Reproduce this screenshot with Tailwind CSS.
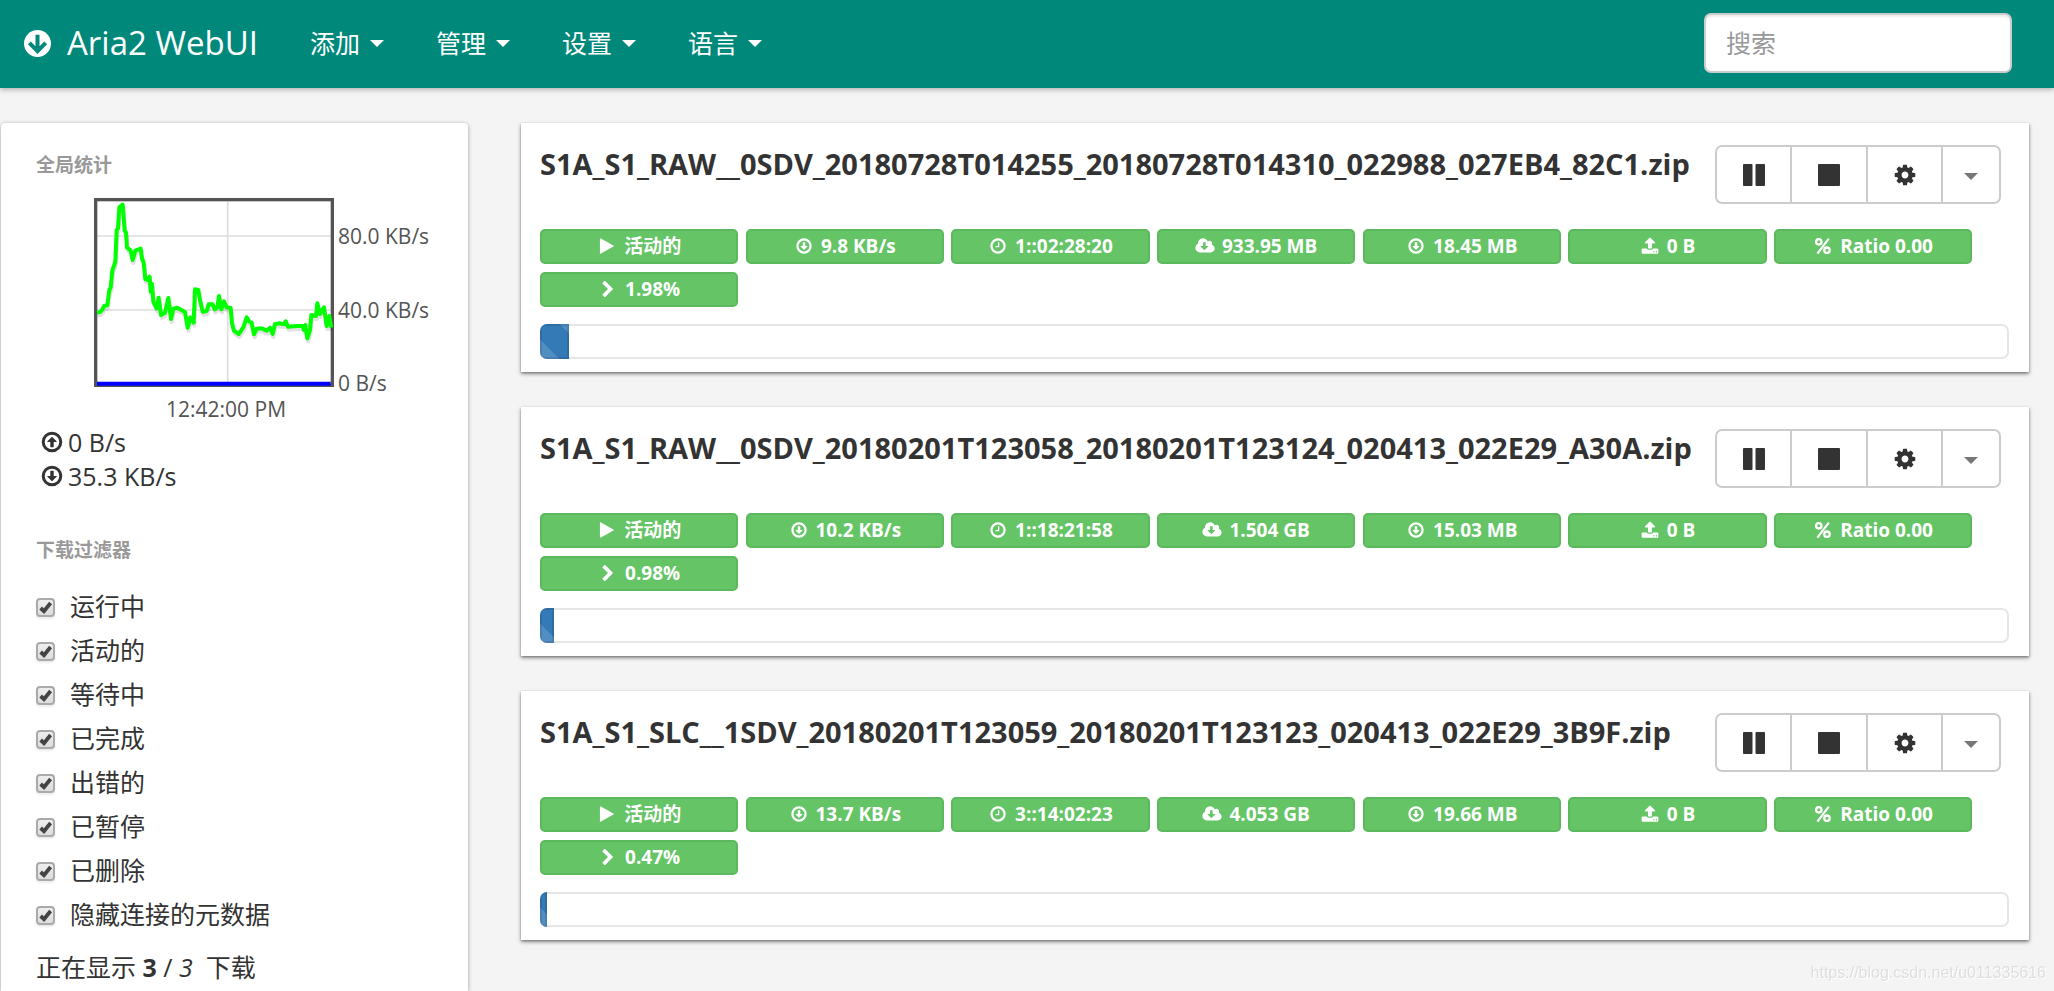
<!DOCTYPE html>
<html lang="zh-CN">
<head>
<meta charset="utf-8">
<meta name="viewport" content="width=device-width, initial-scale=1">
<title>Aria2 WebUI</title>
<script src="https://cdn.jsdelivr.net/npm/@tailwindcss/browser@4"></script>
</head>
<body class="min-h-screen overflow-x-hidden bg-[#f4f4f4] font-['Open_Sans','Noto_Sans_CJK_SC',sans-serif] text-[25px] text-[#333]">

<svg class="hidden" aria-hidden="true">
  <symbol id="play" viewBox="0 0 1792 1792"><path d="M1576 927l-1328 738q-23 13-39.5 3t-16.5-36v-1472q0-26 16.5-36t39.5 3l1328 738q23 13 23 31t-23 31z"/></symbol>
  <symbol id="down" viewBox="0 0 1792 1792"><path d="M1248 928q0 12-10 24l-319 319q-10 9-23 9t-23-9l-320-320q-15-16-7-35 8-20 30-20h192v-352q0-14 9-23t23-9h192q14 0 23 9t9 23v352h192q14 0 23 9t9 23z"/><circle cx="896" cy="896" r="656" fill="none" stroke="currentColor" stroke-width="224"/></symbol>
  <symbol id="up" viewBox="0 0 1792 1792"><g transform="rotate(180 896 896)"><path d="M1248 928q0 12-10 24l-319 319q-10 9-23 9t-23-9l-320-320q-15-16-7-35 8-20 30-20h192v-352q0-14 9-23t23-9h192q14 0 23 9t9 23v352h192q14 0 23 9t9 23z"/><circle cx="896" cy="896" r="656" fill="none" stroke="currentColor" stroke-width="224"/></g></symbol>
  <symbol id="clock" viewBox="0 0 1792 1792"><path d="M1024 544v448q0 14-9 23t-23 9h-320q-14 0-23-9t-9-23v-64q0-14 9-23t23-9h224v-352q0-14 9-23t23-9h64q14 0 23 9t9 23z"/><circle cx="896" cy="896" r="656" fill="none" stroke="currentColor" stroke-width="224"/></symbol>
  <symbol id="cloud" viewBox="-64 0 1920 1792"><path d="M1216 928q0-14-9-23t-23-9h-224v-352q0-13-9.5-22.5t-22.5-9.5h-192q-13 0-22.5 9.5t-9.5 22.5v352h-224q-13 0-22.5 9.5t-9.5 22.5q0 14 9 23l352 352q9 9 23 9t23-9l351-351q10-12 10-24zm640 224q0 159-112.5 271.5t-271.5 112.5h-1088q-185 0-316.5-131.5t-131.5-316.5q0-130 70-240t188-165q-2-30-2-43 0-212 150-362t362-150q156 0 285.5 87t188.5 231q71-62 166-62 106 0 181 75t75 181q0 76-41 138 130 31 213.5 135.5t83.5 238.5z"/></symbol>
  <symbol id="upload" viewBox="0 0 1792 1792"><path d="M1344 1472q0-26-19-45t-45-19-45 19-19 45 19 45 45 19 45-19 19-45zm256 0q0-26-19-45t-45-19-45 19-19 45 19 45 45 19 45-19 19-45zm128-224v320q0 40-28 68t-68 28h-1472q-40 0-68-28t-28-68v-320q0-40 28-68t68-28h427q21 56 70.5 92t110.5 36h256q61 0 110.5-36t70.5-92h427q40 0 68 28t28 68zm-325-648q-17 40-59 40h-256v448q0 26-19 45t-45 19h-256q-26 0-45-19t-19-45v-448h-256q-42 0-59-40-17-39 14-69l448-448q18-19 45-19t45 19l448 448q31 30 14 69z"/></symbol>
  <symbol id="percent" viewBox="0 0 18 18"><g fill="none" stroke="currentColor" stroke-width="2.300"><circle cx="4.8" cy="4.8" r="2.7"/><circle cx="13" cy="13.2" r="2.7"/><path d="M14.8 1.6L3.4 16.6"/></g></symbol>
  <symbol id="chevron" viewBox="0 0 1792 1792"><path d="M1363 941l-742 742q-19 19-45 19t-45-19l-166-166q-19-19-19-45t19-45l531-531-531-531q-19-19-19-45t19-45l166-166q19-19 45-19t45 19l742 742q19 19 19 45t-19 45z"/></symbol>
  <symbol id="pause" viewBox="0 0 24 24"><path d="M2 1h7.500q1 0 1 1v20q0 1-1 1h-7.500q-1 0-1-1v-20q0-1 1-1zM14.500 1h7.500q1 0 1 1v20q0 1-1 1h-7.500q-1 0-1-1v-20q0-1 1-1z"/></symbol>
  <symbol id="stop" viewBox="0 0 24 24"><rect x="1" y="1" width="22" height="22" rx="1"/></symbol>
  <symbol id="cog" viewBox="0 0 1792 1792"><path d="M1152 896q0-106-75-181t-181-75-181 75-75 181 75 181 181 75 181-75 75-181zm512-109v222q0 12-8 23t-20 13l-185 28q-19 54-39 91 35 50 107 138 10 12 10 25t-9 23q-27 37-99 108t-94 71q-12 0-26-9l-138-108q-44 23-91 38-16 136-29 186-7 28-36 28h-222q-14 0-24.500-8.500t-11.500-21.500l-28-184q-49-16-90-37l-141 107q-10 9-25 9-14 0-25-11-126-114-165-168-7-10-7-23 0-12 8-23 15-21 51-66.500t54-70.500q-27-50-41-99l-183-27q-13-2-21-12.500t-8-23.500v-222q0-12 8-23t19-13l186-28q14-46 39-92-40-57-107-138-10-12-10-24 0-10 9-23 26-36 98.500-107.500t94.500-71.500q13 0 26 10l138 107q44-23 91-38 16-136 29-186 7-28 36-28h222q14 0 24.500 8.500t11.500 21.500l28 184q49 16 90 37l142-107q9-9 24-9 13 0 25 10 129 119 165 170 7 8 7 22 0 12-8 23-15 21-51 66.500t-54 70.500q26 50 41 98l183 28q13 2 21 12.500t8 23.500z"/></symbol>
  <symbol id="caret" viewBox="0 0 14 7"><path d="M0 0h14L7 7z"/></symbol>
  <symbol id="check" viewBox="0 0 19 19"><path d="M4.600 10L8 13.200L14.600 5" fill="none" stroke="#444" stroke-width="3.800"/></symbol>
  <symbol id="logo" viewBox="27 59.500 81 81"><circle cx="67.500" cy="100" r="40.500"/><path d="M67.500 74v50M43 98l24.500 25L92 98" fill="none" stroke="#00897b" stroke-width="12"/></symbol>
</svg>

<header class="flex h-[88px] items-center justify-between bg-[#00897b] pr-[42px] pb-0.5 pl-6 text-white shadow-[0_2px_5px_rgba(0,0,0,0.26)]">
  <nav class="flex items-center">
    <a href="#" class="mr-[26px] flex items-center gap-4 text-[33px] leading-10"><svg class="size-[27px] fill-current"><use href="#logo"/></svg><span class="whitespace-nowrap">Aria2 WebUI</span></a>
    <ul class="flex">
      <li><button type="button" class="flex items-center gap-[10px] px-[26px] leading-10">添加<svg class="h-[7px] w-[14px] fill-current"><use href="#caret"/></svg></button></li>
      <li><button type="button" class="flex items-center gap-[10px] px-[26px] leading-10">管理<svg class="h-[7px] w-[14px] fill-current"><use href="#caret"/></svg></button></li>
      <li><button type="button" class="flex items-center gap-[10px] px-[26px] leading-10">设置<svg class="h-[7px] w-[14px] fill-current"><use href="#caret"/></svg></button></li>
      <li><button type="button" class="flex items-center gap-[10px] px-[26px] leading-10">语言<svg class="h-[7px] w-[14px] fill-current"><use href="#caret"/></svg></button></li>
    </ul>
  </nav>
  <input type="search" aria-label="搜索" placeholder="搜索" class="h-[60px] w-[308px] rounded-[7px] border-2 border-[#ccc] bg-white px-5 text-[#555] shadow-[inset_0_2px_2px_rgba(0,0,0,0.08)] placeholder:text-[#999]">
</header>

<div class="flex pt-[35px] pr-[25px] pl-px">
  <aside class="mr-[53px] min-h-[868px] w-[467px] shrink-0 rounded-t bg-white px-[35px] pt-7 shadow-[0_1px_4px_rgba(0,0,0,0.36)]">
    <h2 class="text-[19px] leading-7 font-bold text-[#999]">全局统计</h2>
    <div class="mt-[19px] flex pl-[58px] text-[21px] text-[#545454]">
      <figure class="w-[240px]">
        <svg class="block h-[189px] w-[240px]" viewBox="42 54 720 567" fill="none" role="img" aria-label="下载速度">
          <path d="M51 168H752M51 390H752M443 66V610" stroke="#ddd" stroke-width="5"/>
          <rect x="47" y="59" width="710" height="557" stroke="#545454" stroke-width="10"/>
          <path transform="translate(2 9)" stroke="#000" stroke-opacity="0.12" stroke-width="12" stroke-linejoin="round" d="M51 398L60 396 68 388 72 378 82 376 88 330 92 322 97 272 106 245 110 150 114 145 118 82 128 74 134 152 138 158 141 203 152 211 158 240 166 212 182 206 186 235 191 248 196 298 204 300 209 290 212 335 216 312 220 365 230 385 236 353 243 405 255 398 265 354 273 417 280 386 292 383 315 396 323 443 331 412 341 428 345 328 355 330 360 360 368 395 380 393 386 373 398 373 404 388 412 382 417 348 424 388 432 364 440 382 452 384 456 430 462 452 476 462 490 442 500 412 508 425 515 428 522 463 530 446 545 445 560 452 570 443 578 462 585 432 600 430 612 433 617 424 624 440 650 438 668 438 672 450 676 435 682 475 690 450 694 405 708 408 712 370 720 402 732 382 740 438 748 408 751 443"/>
          <path stroke="#0f0" stroke-width="12" stroke-linejoin="round" d="M51 398L60 396 68 388 72 378 82 376 88 330 92 322 97 272 106 245 110 150 114 145 118 82 128 74 134 152 138 158 141 203 152 211 158 240 166 212 182 206 186 235 191 248 196 298 204 300 209 290 212 335 216 312 220 365 230 385 236 353 243 405 255 398 265 354 273 417 280 386 292 383 315 396 323 443 331 412 341 428 345 328 355 330 360 360 368 395 380 393 386 373 398 373 404 388 412 382 417 348 424 388 432 364 440 382 452 384 456 430 462 452 476 462 490 442 500 412 508 425 515 428 522 463 530 446 545 445 560 452 570 443 578 462 585 432 600 430 612 433 617 424 624 440 650 438 668 438 672 450 676 435 682 475 690 450 694 405 708 408 712 370 720 402 732 382 740 438 748 408 754 443"/>
          <path d="M51 611H752" stroke="#00f" stroke-width="12"/>
        </svg>
        <figcaption class="pt-2 pl-6 text-center leading-7">12:42:00 PM</figcaption>
      </figure>
      <ul class="flex flex-col pt-6 pl-1 leading-7 whitespace-nowrap">
        <li>80.0 KB/s</li><li class="mt-[46px]">40.0 KB/s</li><li class="mt-[45px]">0 B/s</li>
      </ul>
    </div>
    <div class="pt-0.5 pl-1 leading-[34px]">
      <p class="flex items-center gap-1"><svg class="size-6 fill-current"><use href="#up"/></svg>0 B/s</p>
      <p class="flex items-center gap-1"><svg class="size-6 fill-current"><use href="#down"/></svg>35.3 KB/s</p>
    </div>
    <h2 class="mt-[43px] text-[19px] leading-7 font-bold text-[#999]">下载过滤器</h2>
    <div id="filters" class="mt-[21px]"></div>
    <p class="mt-2 leading-[44px] whitespace-pre">正在显示 <b>3</b> / <i>3</i>  下载</p>
  </aside>
  <main id="downloads" class="flex min-w-0 flex-1 flex-col gap-[35px]"></main>
</div>

<p class="fixed right-2 bottom-1.5 font-['Liberation_Sans',sans-serif] text-base leading-6 text-[#dedede] [text-shadow:1px_1px_0_#ffffff]">https://blog.csdn.net/u011335616</p>

<script>
const filters = ['运行中', '活动的', '等待中', '已完成', '出错的', '已暂停', '已删除', '隐藏连接的元数据'];
document.getElementById('filters').innerHTML = filters.map(name => `
  <label class="flex h-[44px] items-center gap-[15px]">
    <span class="grid size-[19px]">
      <input type="checkbox" checked class="peer col-start-1 row-start-1 size-[19px] appearance-none rounded-[4px] border-2 border-[#aaa] bg-linear-to-b from-[#eee] to-[#ddd] shadow-[0_2px_2px_rgba(0,0,0,0.08)]">
      <svg class="pointer-events-none invisible col-start-1 row-start-1 size-[19px] peer-checked:visible"><use href="#check"/></svg>
    </span>${name}</label>`).join('');

const downloads = [
  { name: 'S1A_S1_RAW__0SDV_20180728T014255_20180728T014310_022988_027EB4_82C1.zip', speed: '9.8 KB/s', left: '1::02:28:20', size: '933.95 MB', done: '18.45 MB', pct: 1.98 },
  { name: 'S1A_S1_RAW__0SDV_20180201T123058_20180201T123124_020413_022E29_A30A.zip', speed: '10.2 KB/s', left: '1::18:21:58', size: '1.504 GB', done: '15.03 MB', pct: 0.98 },
  { name: 'S1A_S1_SLC__1SDV_20180201T123059_20180201T123123_020413_022E29_3B9F.zip', speed: '13.7 KB/s', left: '3::14:02:23', size: '4.053 GB', done: '19.66 MB', pct: 0.47 },
];
const tag = (icon, text) => `<li class="flex h-[35px] w-[13.5%] items-center justify-center gap-[7px] rounded-[5px] border-2 border-[#5cb85c] bg-[#64c466] pb-0.5 whitespace-nowrap"><svg class="h-[18px] w-5 fill-current"><use href="#${icon}"/></svg>${text}</li>`;
document.getElementById('downloads').innerHTML = downloads.map(d => `
  <article class="bg-white pt-[22px] pr-5 pb-[13px] pl-[19px] shadow-[0_2px_4px_rgba(0,0,0,0.4),0_1px_2px_rgba(0,0,0,0.25)]">
    <div class="flex items-start justify-between pr-2">
      <h3 class="text-[29px] leading-[38px] font-bold whitespace-nowrap">${d.name}</h3>
      <div class="flex h-[59px] shrink-0 divide-x-2 divide-[#ccc] rounded-[7px] border-2 border-[#ccc]">
        <button type="button" aria-label="暂停" class="grid w-[75px] place-items-center"><svg class="size-6 fill-current"><use href="#pause"/></svg></button>
        <button type="button" aria-label="停止" class="grid w-[76px] place-items-center"><svg class="size-6 fill-current"><use href="#stop"/></svg></button>
        <button type="button" aria-label="设置" class="grid w-[75px] place-items-center"><svg class="size-6 fill-current"><use href="#cog"/></svg></button>
        <button type="button" aria-label="更多" class="grid w-[56px] place-items-center pt-1"><svg class="h-[7px] w-[14px] fill-[#777]"><use href="#caret"/></svg></button>
      </div>
    </div>
    <ul class="mt-[25px] flex flex-wrap gap-x-[0.5%] gap-y-2 text-[19px] leading-7 font-bold text-white">
      ${tag('play', '活动的')}${tag('down', d.speed)}${tag('clock', d.left)}${tag('cloud', d.size)}${tag('down', d.done)}${tag('upload', '0 B')}${tag('percent', 'Ratio 0.00')}${tag('chevron', d.pct + '%')}
    </ul>
    <div class="mt-[17px] h-[35px] overflow-hidden rounded-[7px] bg-white inset-ring-2 inset-ring-[#e6e6e6]" role="progressbar" aria-label="进度" aria-valuenow="${d.pct}">
      <div class="h-full bg-[#337ab7] bg-[linear-gradient(45deg,rgba(255,255,255,0.15)_25%,transparent_25%,transparent_50%,rgba(255,255,255,0.15)_50%,rgba(255,255,255,0.15)_75%,transparent_75%)] bg-[length:70px_70px] bg-[position:0_-19px] inset-ring-2 inset-ring-black/10" style="width:${d.pct}%"></div>
    </div>
  </article>`).join('');
</script>
</body>
</html>
